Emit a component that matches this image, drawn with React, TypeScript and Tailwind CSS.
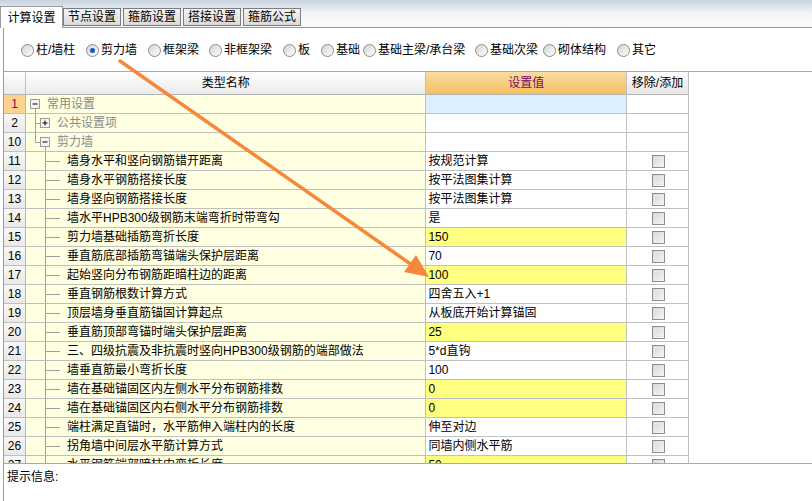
import React from "react";

type Row = { n: number; name: string; value: string; yellow?: boolean };

const radios = [
  { label: "柱/墙柱", w: "w-[65px]" },
  { label: "剪力墙", w: "w-[62px]", on: true },
  { label: "框架梁", w: "w-[61px]" },
  { label: "非框架梁", w: "w-[74px]" },
  { label: "板", w: "w-[38px]" },
  { label: "基础", w: "w-[42px]" },
  { label: "基础主梁/承台梁", w: "w-[112px]" },
  { label: "基础次梁", w: "w-[68px]" },
  { label: "砌体结构", w: "w-[74px]" },
  { label: "其它", w: "" },
];

const tabs = ["节点设置", "箍筋设置", "搭接设置", "箍筋公式"];

const rows: Row[] = [
  { n: 11, name: "墙身水平和竖向钢筋错开距离", value: "按规范计算" },
  { n: 12, name: "墙身水平钢筋搭接长度", value: "按平法图集计算" },
  { n: 13, name: "墙身竖向钢筋搭接长度", value: "按平法图集计算" },
  { n: 14, name: "墙水平HPB300级钢筋末端弯折时带弯勾", value: "是" },
  { n: 15, name: "剪力墙基础插筋弯折长度", value: "150", yellow: true },
  { n: 16, name: "垂直筋底部插筋弯锚端头保护层距离", value: "70" },
  { n: 17, name: "起始竖向分布钢筋距暗柱边的距离", value: "100", yellow: true },
  { n: 18, name: "垂直钢筋根数计算方式", value: "四舍五入+1" },
  { n: 19, name: "顶层墙身垂直筋锚固计算起点", value: "从板底开始计算锚固" },
  { n: 20, name: "垂直筋顶部弯锚时端头保护层距离", value: "25", yellow: true },
  { n: 21, name: "三、四级抗震及非抗震时竖向HPB300级钢筋的端部做法", value: "5*d直钩" },
  { n: 22, name: "墙垂直筋最小弯折长度", value: "100" },
  { n: 23, name: "墙在基础锚固区内左侧水平分布钢筋排数", value: "0", yellow: true },
  { n: 24, name: "墙在基础锚固区内右侧水平分布钢筋排数", value: "0", yellow: true },
  { n: 25, name: "端柱满足直锚时，水平筋伸入端柱内的长度", value: "伸至对边" },
  { n: 26, name: "拐角墙中间层水平筋计算方式", value: "同墙内侧水平筋" },
  { n: 27, name: "水平钢筋端部暗柱内弯折长度", value: "50", yellow: true },
];

function Box({ x, plus }: { x: number; plus?: boolean }) {
  return (
    <g>
      <rect x={x + 0.5} y={4.5} width={9} height={9} fill="#f4f4f4" stroke="#9c9c9c" />
      <line x1={x + 2.5} y1={9} x2={x + 7.5} y2={9} stroke="#000" />
      {plus && <line x1={x + 5} y1={6.5} x2={x + 5} y2={11.5} stroke="#000" />}
    </g>
  );
}

function Tree({ kind }: { kind: "root" | "group" | "groupLast" | "leaf" }) {
  const w = kind === "root" ? 21 : kind === "leaf" ? 41 : 31;
  return (
    <svg width={w} height={18} className="shrink-0">
      {kind === "root" && (
        <>
          <line x1={9.5} y1={14} x2={9.5} y2={18} stroke="#a0a0a0" />
          <Box x={4} />
        </>
      )}
      {kind === "group" && (
        <>
          <line x1={9.5} y1={0} x2={9.5} y2={18} stroke="#a0a0a0" />
          <line x1={9.5} y1={9.5} x2={14} y2={9.5} stroke="#a0a0a0" />
          <Box x={14} plus />
        </>
      )}
      {kind === "groupLast" && (
        <>
          <line x1={9.5} y1={0} x2={9.5} y2={9.5} stroke="#a0a0a0" />
          <line x1={9.5} y1={9.5} x2={14} y2={9.5} stroke="#a0a0a0" />
          <line x1={19.5} y1={14} x2={19.5} y2={18} stroke="#a0a0a0" />
          <Box x={14} />
        </>
      )}
      {kind === "leaf" && (
        <>
          <line x1={19.5} y1={0} x2={19.5} y2={18} stroke="#a0a0a0" />
          <line x1={19.5} y1={9.5} x2={34} y2={9.5} stroke="#a0a0a0" />
        </>
      )}
    </svg>
  );
}

function Check() {
  return (
    <div className="w-[13px] h-[13px] border border-[#8e8e8e] bg-gradient-to-br from-[#d2d2d2] to-[#fbfbfb] p-[1px]">
      <div className="w-full h-full border border-[#e8e8e8]" />
    </div>
  );
}

function NumCell({ n, active }: { n: number; active?: boolean }) {
  return (
    <div
      className={
        active
          ? "w-[22px] h-full flex items-center justify-center border-r border-[#b5b5b5] bg-[#fdd28e] text-[#7a0a6a]"
          : "w-[22px] h-full flex items-center justify-center border-r border-[#b5b5b5] bg-gradient-to-b from-[#f8f8f8] to-[#e9e9e9]"
      }
    >
      {n}
    </div>
  );
}

export default function App() {
  return (
    <div className="relative w-[812px] h-[501px] overflow-hidden bg-white text-[12px] text-black font-['Liberation_Sans','Noto_Sans_CJK_SC',sans-serif]">
      {/* TABS */}
      <div className="h-[28px] flex items-end border-b border-[#9a9a9a] bg-gradient-to-b from-[#c8d2df] via-[#f2f4f7] to-[#fafafa]">
        <div className="relative z-10 w-[63px] h-[22px] -mb-px bg-white border border-b-0 border-[#9a9a9a] flex items-center justify-center">
          计算设置
        </div>
        {tabs.map((t) => (
          <div
            key={t}
            className="w-[58px] h-[18px] mr-[2px] mb-[1px] border border-[#7c7c7c] bg-gradient-to-b from-[#f4f4f4] to-[#dadada] flex items-center justify-center"
          >
            {t}
          </div>
        ))}
      </div>

      {/* PANEL */}
      <div className="ml-[3px] h-[473px] border-l border-[#9a9a9a] flex flex-col">
        {/* RADIO ROW */}
        <div className="h-[43px] flex items-center pl-[17px] pt-[1px]">
          {radios.map((r) => (
            <div key={r.label} className={`${r.w} flex items-center gap-[2px] shrink-0`}>
              <div className="w-[13px] h-[13px] rounded-full border border-[#8c8c8c] bg-gradient-to-br from-[#d4d4d4] to-[#ffffff] flex items-center justify-center">
                {r.on && <div className="w-[5px] h-[5px] rounded-full bg-[#1a56c4]" />}
              </div>
              <span className="whitespace-nowrap">{r.label}</span>
            </div>
          ))}
        </div>

        {/* TABLE */}
        <div className="h-[393px] border-t border-b border-[#a8a8a8] overflow-hidden">
          <div className="w-[685px] border-r border-[#c0c0c0] h-full">
            {/* header */}
            <div className="h-[23px] flex border-b border-[#b5b5b5]">
              <div className="w-[22px] h-full border-r border-[#c0c0c0] bg-gradient-to-b from-[#ffffff] to-[#ebebeb]" />
              <div className="w-[401px] h-full border-r border-[#c0c0c0] bg-gradient-to-b from-[#ffffff] to-[#ebebeb] flex items-center justify-center">
                类型名称
              </div>
              <div className="w-[201px] h-full border-r border-[#c0c0c0] bg-gradient-to-b from-[#fbdca1] to-[#f2c05f] flex items-center justify-center text-[#7a0a6a]">
                设置值
              </div>
              <div className="w-[61px] h-full bg-gradient-to-b from-[#ffffff] to-[#e6e6e6] flex items-center justify-center whitespace-nowrap">
                移除/添加
              </div>
            </div>

            {/* group rows */}
            <div className="h-[19px] flex border-b border-[#c0c0c0]">
              <NumCell n={1} active />
              <div className="w-[401px] h-full border-r border-[#c0c0c0] bg-[#ffffe1] flex items-center text-[#8a8a8a]">
                <Tree kind="root" />
                <span>常用设置</span>
              </div>
              <div className="w-[201px] h-full border-r border-[#c0c0c0] bg-[#ddeeff]" />
              <div className="w-[61px] h-full" />
            </div>
            <div className="h-[19px] flex border-b border-[#c0c0c0]">
              <NumCell n={2} />
              <div className="w-[401px] h-full border-r border-[#c0c0c0] bg-[#ffffe1] flex items-center text-[#8a8a8a]">
                <Tree kind="group" />
                <span>公共设置项</span>
              </div>
              <div className="w-[201px] h-full border-r border-[#c0c0c0]" />
              <div className="w-[61px] h-full" />
            </div>
            <div className="h-[19px] flex border-b border-[#c0c0c0]">
              <NumCell n={10} />
              <div className="w-[401px] h-full border-r border-[#c0c0c0] bg-[#ffffe1] flex items-center text-[#8a8a8a]">
                <Tree kind="groupLast" />
                <span>剪力墙</span>
              </div>
              <div className="w-[201px] h-full border-r border-[#c0c0c0]" />
              <div className="w-[61px] h-full" />
            </div>

            {/* leaf rows */}
            {rows.map((r) => (
              <div key={r.n} className="h-[19px] flex border-b border-[#c0c0c0]">
                <NumCell n={r.n} />
                <div className="w-[401px] h-full border-r border-[#c0c0c0] bg-[#ffffe1] flex items-center">
                  <Tree kind="leaf" />
                  <span className="whitespace-nowrap">{r.name}</span>
                </div>
                <div
                  className={
                    r.yellow
                      ? "w-[201px] h-full border-r border-[#c0c0c0] bg-[#ffff80] flex items-center pl-[2px]"
                      : "w-[201px] h-full border-r border-[#c0c0c0] flex items-center pl-[2px]"
                  }
                >
                  {r.value}
                </div>
                <div className="w-[61px] h-full flex items-center justify-center pl-[1px]">
                  <Check />
                </div>
              </div>
            ))}
          </div>
        </div>

        {/* HINT */}
        <div className="flex-1 pl-[3px] pt-[4px]">提示信息:</div>
      </div>

      {/* ARROW */}
      <svg className="absolute left-0 top-0 pointer-events-none" width={812} height={501}>
        <line x1={120} y1={61} x2={412} y2={265} stroke="#f5883a" strokeWidth={3.5} strokeLinecap="round" />
        <polygon points="429,277 404,272 416,255" fill="#f5883a" />
      </svg>
    </div>
  );
}
